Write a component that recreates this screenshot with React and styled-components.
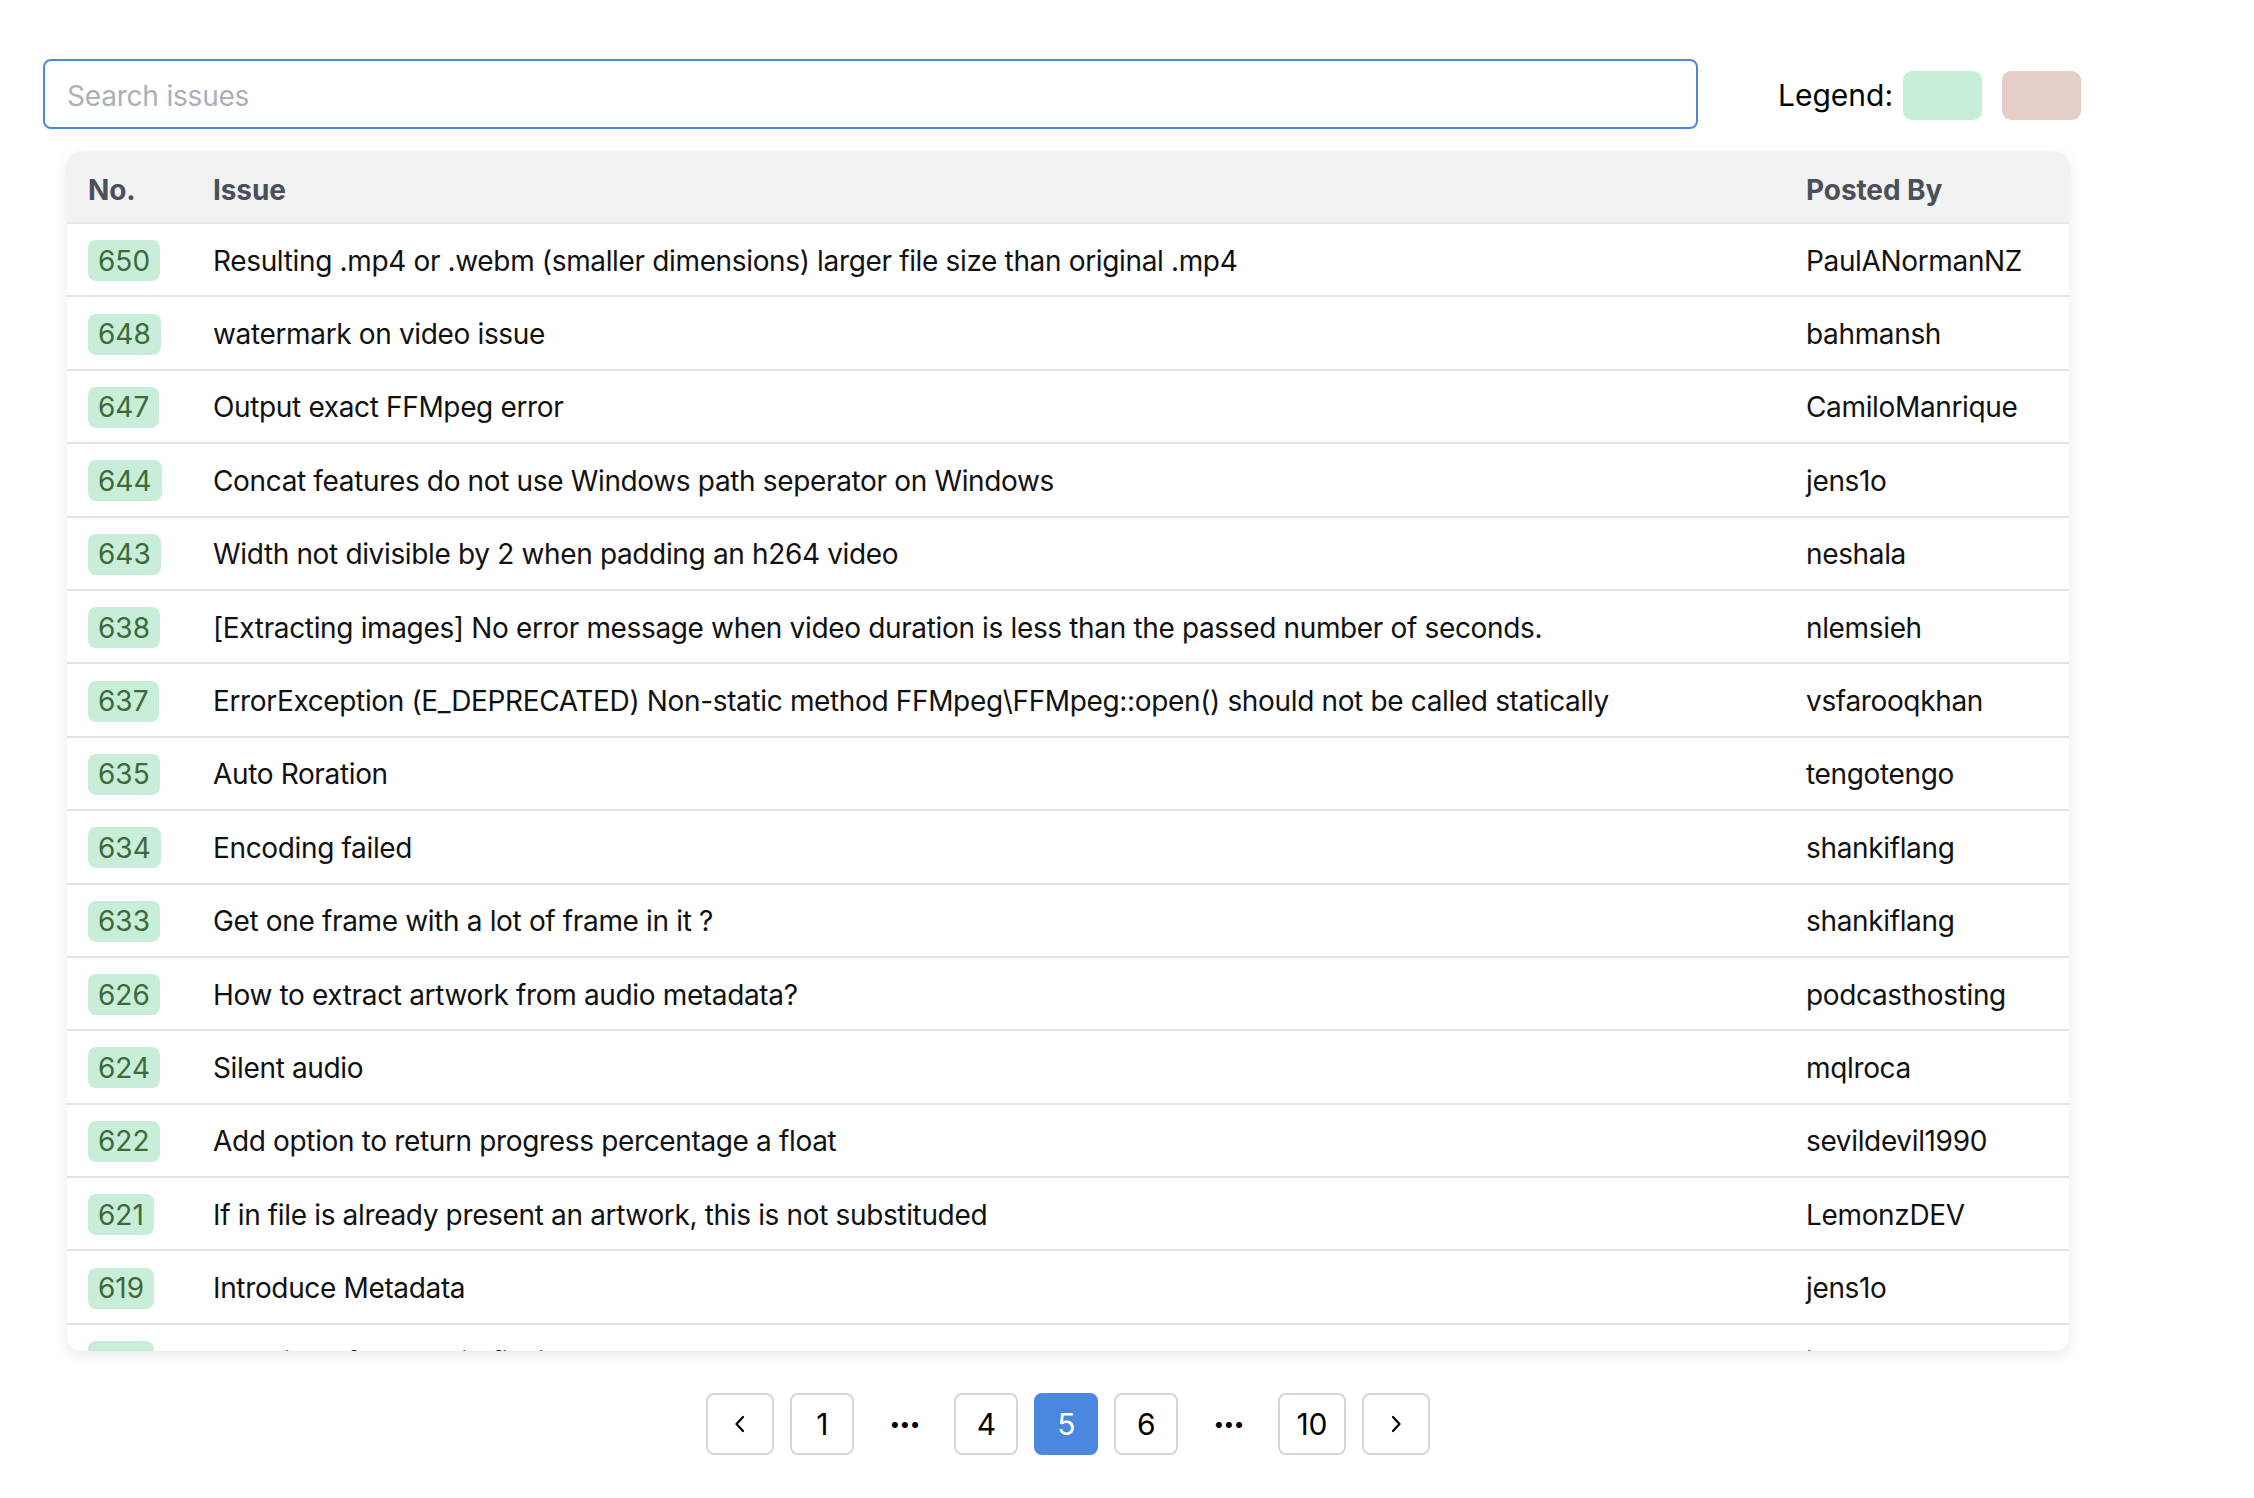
import React from 'react'
import styled, { createGlobalStyle } from 'styled-components'

const GlobalStyle = createGlobalStyle`
  html, body {
    margin: 0;
    padding: 0;
    background: #ffffff;
    font-family: Inter, "Noto Sans", "Liberation Sans", sans-serif;
    color: #111111;
  }
  * { box-sizing: border-box; }
`;

const Page = styled.div`
  padding: 59px 0 40px 43px;
`;

const TopBar = styled.div`
  display: flex;
  align-items: center;
  gap: 80px;
`;

const Search = styled.input`
  width: 1655px;
  height: 70px;
  border: 2px solid #4a88e0;
  border-radius: 8px;
  padding: 4px 22px 0;
  font-family: inherit;
  font-size: 28px;
  letter-spacing: -0.2px;
  color: #111;
  outline: none;
  caret-color: #000;

  &::placeholder {
    color: #a9b0b9;
  }
`;

const Legend = styled.div`
  display: flex;
  align-items: center;
  font-size: 30px;
  color: #000;
  padding-top: 2px;

  span {
    margin-right: 10px;
  }
`;

const Swatch = styled.div`
  width: 79px;
  height: 49px;
  border-radius: 9px;
  background: ${p => p.color};
  margin-right: ${p => p.gap || 0}px;
`;

const Content = styled.div`
  margin: 23px 0 0 24px;
  width: 2002px;
`;

const Card = styled.div`
  height: 1199px;
  overflow: hidden;
  border-radius: 14px;
  background: #fff;
  box-shadow: 0 4px 14px rgba(0, 0, 0, 0.09), 0 0 2px rgba(0, 0, 0, 0.05);
`;

const Row = styled.div`
  display: grid;
  grid-template-columns: 125px 1fr 284px;
  align-items: center;
  height: ${p => (p.head ? 72 : 73.4)}px;
  border-bottom: 2px solid ${p => (p.head ? '#e6e7eb' : '#e1e3e7')};
  background: ${p => (p.head ? '#f2f2f2' : '#fff')};
`;

const Cell = styled.div`
  padding: 2px 0 0 21px;
  font-size: 28px;
  letter-spacing: -0.35px;
  white-space: nowrap;
  overflow: hidden;
`;

const HeadCell = styled(Cell)`
  padding-top: 5px;
  font-weight: 700;
  letter-spacing: -0.1px;
  color: #4a5059;
`;

const Badge = styled.span`
  display: inline-flex;
  align-items: center;
  height: 41px;
  padding: 0 10px;
  border-radius: 8px;
  background: ${p => (p.closed ? '#e5cdc8' : '#c8eed9')};
  color: ${p => (p.closed ? '#7a3a32' : '#3c6a38')};
  font-size: 28px;
  letter-spacing: 0;
`;

const Pager = styled.div`
  display: flex;
  justify-content: center;
  align-items: center;
  gap: 16px;
  margin-top: 42px;
`;

const PageButton = styled.button`
  min-width: ${p => p.w || 64}px;
  height: 62px;
  padding: 0 16px;
  display: inline-flex;
  align-items: center;
  justify-content: center;
  border: 2px solid ${p => (p.active ? '#4a88e0' : '#d3d7dd')};
  border-radius: 8px;
  background: ${p => (p.active ? '#4a88e0' : '#fff')};
  color: ${p => (p.active ? '#fff' : '#000')};
  font-family: inherit;
  font-size: 30px;
  cursor: pointer;
`;

const Dots = styled.span`
  width: 68px;
  text-align: center;
  font-size: 30px;
  font-weight: 900;
  color: #000;
  letter-spacing: -1px;
`;

const Chevron = ({ dir }) => (
  <svg width="14" height="24" viewBox="0 0 14 24" fill="none">
    <path
      d={dir === 'left' ? 'M10 5 L3.5 12 L10 19' : 'M4 5 L10.5 12 L4 19'}
      stroke="#000"
      strokeWidth="2.2"
      strokeLinecap="round"
      strokeLinejoin="round"
    />
  </svg>
);

const issues = [
  [650, 'Resulting .mp4 or .webm (smaller dimensions) larger file size than original .mp4', 'PaulANormanNZ'],
  [648, 'watermark on video issue', 'bahmansh'],
  [647, 'Output exact FFMpeg error', 'CamiloManrique'],
  [644, 'Concat features do not use Windows path seperator on Windows', 'jens1o'],
  [643, 'Width not divisible by 2 when padding an h264 video', 'neshala'],
  [638, '[Extracting images] No error message when video duration is less than the passed number of seconds.', 'nlemsieh'],
  [637, 'ErrorException (E_DEPRECATED) Non-static method FFMpeg\\FFMpeg::open() should not be called statically', 'vsfarooqkhan'],
  [635, 'Auto Roration', 'tengotengo'],
  [634, 'Encoding failed', 'shankiflang'],
  [633, 'Get one frame with a lot of frame in it ?', 'shankiflang'],
  [626, 'How to extract artwork from audio metadata?', 'podcasthosting'],
  [624, 'Silent audio', 'mqlroca'],
  [622, 'Add option to return progress percentage a float', 'sevildevil1990'],
  [621, 'If in file is already present an artwork, this is not substituded', 'LemonzDEV'],
  [619, 'Introduce Metadata', 'jens1o'],
  [618, 'Duration of the audio file is wrong', 'jens1o'],
];

export default function App() {
  return (
    <>
      <GlobalStyle />
      <Page>
        <TopBar>
          <Search placeholder="Search issues" autoFocus />
          <Legend>
            <span>Legend:</span>
            <Swatch color="#c6eed8" gap={20} />
            <Swatch color="#e5cdc8" />
          </Legend>
        </TopBar>
        <Content>
          <Card>
            <Row head>
              <HeadCell>No.</HeadCell>
              <HeadCell>Issue</HeadCell>
              <HeadCell>Posted By</HeadCell>
            </Row>
            {issues.map(([no, title, user]) => (
              <Row key={no}>
                <Cell><Badge>{no}</Badge></Cell>
                <Cell>{title}</Cell>
                <Cell>{user}</Cell>
              </Row>
            ))}
          </Card>
          <Pager>
            <PageButton w={68}><Chevron dir="left" /></PageButton>
            <PageButton>1</PageButton>
            <Dots>···</Dots>
            <PageButton>4</PageButton>
            <PageButton active>5</PageButton>
            <PageButton>6</PageButton>
            <Dots>···</Dots>
            <PageButton>10</PageButton>
            <PageButton w={68}><Chevron dir="right" /></PageButton>
          </Pager>
        </Content>
      </Page>
    </>
  )
}
